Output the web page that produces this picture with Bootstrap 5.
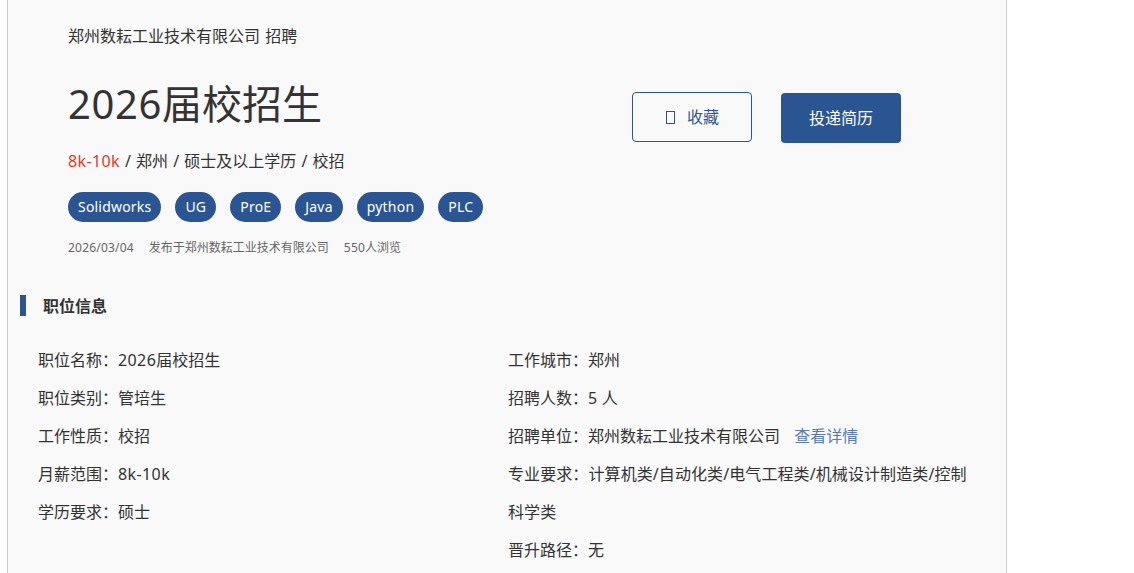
<!DOCTYPE html>
<html lang="zh-CN">
<head>
<meta charset="utf-8">
<title>2026届校招生</title>
<link rel="stylesheet" href="https://cdn.jsdelivr.net/npm/bootstrap@5.3.0/dist/css/bootstrap.min.css">
<style>
html,body{height:573px;overflow:hidden;background:#fff}
body{font-family:"Noto Sans","Noto Sans CJK SC",sans-serif;color:#333;font-size:16px}
.job-panel{width:1000px;margin-left:7px;height:573px;background:#f9f9f9;border-left:1px solid #ccc;border-right:1px solid #ccc;overflow:hidden}
.job-head{padding:25px 0 0 60px;height:268px}
.job-main{width:564px}
.job-company{font-size:16px;line-height:22px;height:22px;word-spacing:1px}
.job-title{font-size:40px;line-height:60px;margin:27px 0 0;font-weight:400;color:#333}
.job-title .num{letter-spacing:.6px}
.job-sub{font-size:16px;line-height:24px;margin-top:15px;word-spacing:1px}
.job-pay{color:#e4391f;letter-spacing:.35px}
.job-tags{gap:14px;margin-top:19px}
.job-tag{background:#2b5592;color:#fff;font-size:14px;line-height:30px;height:30px;padding:0 10px;border-radius:15px;letter-spacing:.2px}
.job-meta{font-size:12px;line-height:18px;margin-top:17px;color:#666;gap:15px}
.job-meta .num{letter-spacing:.2px}
.job-actions{gap:29px;padding-top:67px}
.act-save,.act-send{width:120px;font-size:16px;padding:0;display:flex;align-items:center;justify-content:center}
.act-save{height:50px;border:1px solid #2b5592;color:#2b5592;background:transparent;border-radius:4px;padding-left:1px}
.act-send{height:50px;background:#2b5592;color:#fff;border:0;border-radius:4px;margin-top:1px}
.tofu{display:inline-block;width:9px;height:13px;border:1px solid #2b5592;margin-right:12px}
.sec-title{margin:27px 0 0 12px;border-left:6px solid #2b5592;height:21px;padding-left:17px;font-size:16px;font-weight:700;line-height:23px}
.info-cols{padding:25px 0 0 30px;margin-top:0}
.info-left{width:470px}
.info-right{width:460px}
.info-line{line-height:38px;font-size:16px;margin:0}
.info-line .num{letter-spacing:.4px}
.info-wide{letter-spacing:.09px}
.info-link{color:#5a7ab0;text-decoration:none;margin-left:10px}
</style>
</head>
<body>
<div class="job-panel">
  <div class="job-head d-flex">
    <div class="job-main">
      <div class="job-company">郑州数耘工业技术有限公司 招聘</div>
      <h1 class="job-title"><span class="num">2026</span>届校招生</h1>
      <div class="job-sub"><span class="job-pay">8k-10k</span> / 郑州 / 硕士及以上学历 / 校招</div>
      <div class="job-tags d-flex">
        <span class="job-tag">Solidworks</span>
        <span class="job-tag">UG</span>
        <span class="job-tag">ProE</span>
        <span class="job-tag">Java</span>
        <span class="job-tag">python</span>
        <span class="job-tag">PLC</span>
      </div>
      <div class="job-meta d-flex">
        <span class="num">2026/03/04</span>
        <span>发布于郑州数耘工业技术有限公司</span>
        <span><span class="num">550</span>人浏览</span>
      </div>
    </div>
    <div class="job-actions d-flex align-items-start">
      <button type="button" class="btn act-save"><span class="tofu"></span>收藏</button>
      <button type="button" class="btn act-send">投递简历</button>
    </div>
  </div>
  <div class="sec-title">职位信息</div>
  <div class="info-cols d-flex">
    <div class="info-left">
      <p class="info-line">职位名称：<span class="num">2026</span>届校招生</p>
      <p class="info-line">职位类别：管培生</p>
      <p class="info-line">工作性质：校招</p>
      <p class="info-line">月薪范围：<span class="num">8k-10k</span></p>
      <p class="info-line">学历要求：硕士</p>
    </div>
    <div class="info-right">
      <p class="info-line">工作城市：郑州</p>
      <p class="info-line">招聘人数：<span class="num">5</span> 人</p>
      <p class="info-line">招聘单位：郑州数耘工业技术有限公司 <a class="info-link" href="#">查看详情</a></p>
      <p class="info-line info-wide">专业要求：计算机类/自动化类/电气工程类/机械设计制造类/控制科学类</p>
      <p class="info-line">晋升路径：无</p>
    </div>
  </div>
</div>
<script src="https://cdn.jsdelivr.net/npm/bootstrap@5.3.0/dist/js/bootstrap.bundle.min.js"></script>
</body>
</html>
